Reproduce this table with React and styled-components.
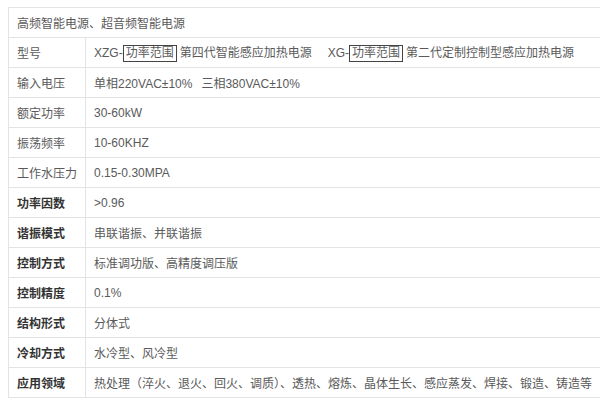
import styled, { createGlobalStyle } from 'styled-components';

const GlobalStyle = createGlobalStyle`
  body {
    margin: 0;
    background: #fff;
    font-family: "Liberation Sans", "Noto Sans CJK SC", sans-serif;
  }
`;

const Page = styled.div`
  padding: 7px 9px 0 8px;
`;

const Table = styled.table`
  width: 583px;
  border-collapse: collapse;
  font-size: 12px;
  color: #5a5a5a;
`;

const Cell = styled.td`
  height: 29px;
  padding: 0 8px;
  border: 1px solid #e3e3e3;
  vertical-align: middle;
  white-space: nowrap;
`;

const LabelCell = styled(Cell)`
  width: 59px;
  color: ${({ $bold }) => ($bold ? '#333' : '#5a5a5a')};
  font-weight: ${({ $bold }) => ($bold ? 700 : 400)};
`;

const Boxed = styled.span`
  display: inline-block;
  border: 1px solid #444;
  padding: 0 2px;
  line-height: 15px;
  margin-right: 3px;
`;

const Gap = styled.span`
  display: inline-block;
  width: ${({ $w }) => $w}px;
`;

const rows = [
  { label: '输入电压', value: <>单相220VAC±10%<Gap $w={9} />三相380VAC±10%</> },
  { label: '额定功率', value: '30-60kW' },
  { label: '振荡频率', value: '10-60KHZ' },
  { label: '工作水压力', value: '0.15-0.30MPA' },
  { label: '功率因数', value: '>0.96', bold: true },
  { label: '谐振模式', value: '串联谐振、并联谐振', bold: true },
  { label: '控制方式', value: '标准调功版、高精度调压版', bold: true },
  { label: '控制精度', value: '0.1%', bold: true },
  { label: '结构形式', value: '分体式', bold: true },
  { label: '冷却方式', value: '水冷型、风冷型', bold: true },
  {
    label: '应用领域',
    value: '热处理（淬火、退火、回火、调质）、透热、熔炼、晶体生长、感应蒸发、焊接、锻造、铸造等',
    bold: true,
  },
];

export default function App() {
  return (
    <Page>
      <GlobalStyle />
      <Table>
        <tbody>
          <tr>
            <Cell colSpan={2}>高频智能电源、超音频智能电源</Cell>
          </tr>
          <tr>
            <LabelCell>型号</LabelCell>
            <Cell>
              XZG-<Boxed>功率范围</Boxed>第四代智能感应加热电源
              <Gap $w={16} />
              XG-<Boxed>功率范围</Boxed>第二代定制控制型感应加热电源
            </Cell>
          </tr>
          {rows.map((r) => (
            <tr key={r.label}>
              <LabelCell $bold={r.bold}>{r.label}</LabelCell>
              <Cell>{r.value}</Cell>
            </tr>
          ))}
        </tbody>
      </Table>
    </Page>
  );
}
